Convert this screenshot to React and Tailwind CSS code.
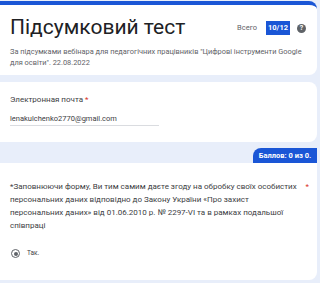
import React from 'react';

export default function App() {
    return (
        <div className="w-[320px] h-[283px] overflow-hidden bg-[#e8eefa] font-['Roboto','Liberation_Sans',sans-serif]">
            <div className="pt-[1px] pr-[3px] flex flex-col">
                {/* Заголовок форми */}
                <div className="h-[74px] bg-white rounded-r-lg border-t-[4px] border-[#1a56d6] pl-[10px] pr-[11px] pt-[9px]">
                    <div className="flex items-center justify-between">
                        <h1 className="text-[21px] leading-[26px] text-[#202124] font-normal">Підсумковий тест</h1>
                        <div className="flex items-center mt-[2px]">
                            <span className="text-[7.5px] text-[#5f6368] mr-[9px]">Всего</span>
                            <span className="bg-[#1a56d6] text-white text-[7.5px] font-bold px-[2px] h-[14px] leading-[14px]">10/12</span>
                            <span className="ml-[7px] w-[9px] h-[9px] rounded-full bg-[#5f6368] text-white text-[7px] font-bold leading-[9px] text-center">?</span>
                        </div>
                    </div>
                    <p className="mt-[6px] text-[7.4px] leading-[11px] text-[#5f6368]">
                        За підсумками вебінара для педагогічних працівників "Цифрові інструменти Google для освіти". 22.08.2022
                    </p>
                </div>

                {/* Пошта */}
                <div className="mt-[7px] h-[60px] bg-white rounded-r-lg pl-[10px] pt-[13px]">
                    <div className="text-[8px] leading-[10px] text-[#3c4043]">
                        Электронная почта <span className="text-[#d93025]">*</span>
                    </div>
                    <div className="mt-[9px] w-[149px] border-b border-[#dadce0] pb-[1px] text-[7.5px] leading-[10px] text-[#3c4043]">
                        lenakulchenko2770@gmail.com
                    </div>
                </div>

                {/* Бали */}
                <div className="flex justify-end pt-[6px]">
                    <div className="h-[15px] w-[64px] bg-[#1a56d6] rounded-tl-lg text-white text-[7.5px] font-bold leading-[15px] text-center">
                        Баллов: 0 из 0.
                    </div>
                </div>

                {/* Згода */}
                <div className="h-[117px] bg-white rounded-br-lg pl-[10px] pr-[8px] pt-[17px]">
                    <div className="flex justify-between">
                        <p className="w-[290px] text-[8px] leading-[13px] text-[#3c4043]">
                            *Заповнюючи форму, Ви тим самим даєте згоду на обробку своїх особистих персональних даних відповідно до Закону України «Про захист персональних даних» від 01.06.2010 р. № 2297-VI та в рамках подальшої співпраці
                        </p>
                        <span className="text-[8px] leading-[13px] text-[#d93025]">*</span>
                    </div>
                    <div className="mt-[17px] ml-[1px] flex items-center">
                        <span className="w-[9px] h-[9px] rounded-full border border-[#5f6368] flex items-center justify-center">
                            <span className="w-[4px] h-[4px] rounded-full bg-[#5f6368]" />
                        </span>
                        <span className="ml-[7px] text-[6.5px] text-[#3c4043]">Так.</span>
                    </div>
                </div>
            </div>
        </div>
    );
}
